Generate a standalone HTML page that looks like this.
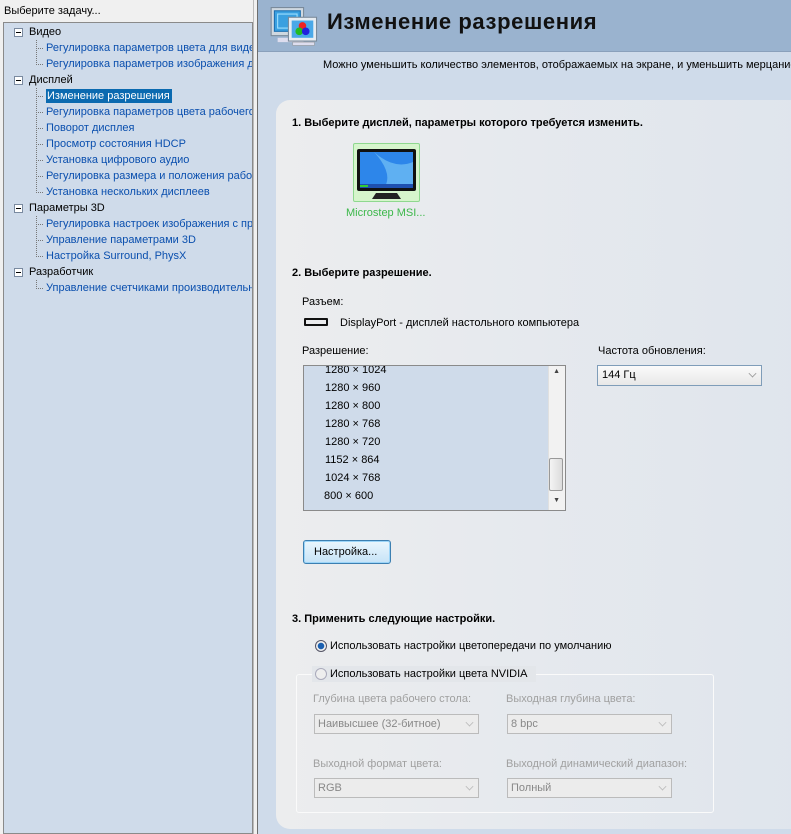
<!DOCTYPE html>
<html><head><meta charset="utf-8"><style>
*{margin:0;padding:0;box-sizing:border-box}
body{width:791px;height:834px;overflow:hidden;background:#f0f0f0;font-family:"Liberation Sans","DejaVu Sans",sans-serif;font-size:11px;color:#000;position:relative}
.a{position:absolute;white-space:nowrap}
#lefttitle{left:4px;top:5px;font-size:11px}
#tree{position:absolute;left:3px;top:22px;width:250px;height:812px;background:#cfdbea;border:1px solid #8a8a8a;overflow:hidden}
.ti{position:absolute;white-space:nowrap;font-size:11px;line-height:14px}
.cat{left:25px;color:#000}
.it{left:42px;color:#0a4fae}
.box{position:absolute;left:10px;width:9px;height:9px;border:1px solid #7a8aa0;background:#fff}
.box:after{content:"";position:absolute;left:1px;top:3px;width:5px;height:1px;background:#000}
.vl{position:absolute;border-left:1px dotted #777}
.hl{position:absolute;border-top:1px dotted #777;width:7px}
#div{position:absolute;left:253px;top:0;width:5px;height:834px;background:#f0f0f0;border-right:1px solid #6e6e6e;border-left:1px solid #bbb}
#right{position:absolute;left:258px;top:0;width:533px;height:834px;background:#cfdbea}
#hdr{position:absolute;left:0;top:0;width:533px;height:52px;background:#9ab3cf;border-bottom:1px solid #8aa0bb}
#ttl{position:absolute;left:69px;top:9px;font-size:22px;font-weight:bold;letter-spacing:0.6px;color:#111}
#panel{position:absolute;left:18px;top:100px;width:530px;height:729px;border-radius:14px 0 0 14px;background:linear-gradient(90deg,#ecedee,#dfe5ed)}
.b{font-weight:bold}
.sel{position:absolute;border:1px solid #7f9db9;background:linear-gradient(#fbfbfb,#e8e8e8)}
.dis{color:#a0a0a0}
.arr{position:absolute;right:5px;top:4px;width:7px;height:7px;border-right:1px solid #999;border-bottom:1px solid #999;transform:rotate(45deg) scale(0.8)}
</style></head><body>
<div class="a" id="lefttitle">Выберите задачу...</div>
<div id="tree">
 <div class="vl" style="left:32px;top:17px;height:25px"></div>
 <div class="vl" style="left:32px;top:65px;height:105px"></div>
 <div class="vl" style="left:32px;top:193px;height:41px"></div>
 <div class="vl" style="left:32px;top:257px;height:9px"></div>
 <div class="hl" style="left:32px;top:25px"></div><div class="hl" style="left:32px;top:41px"></div>
 <div class="hl" style="left:32px;top:73px"></div><div class="hl" style="left:32px;top:89px"></div><div class="hl" style="left:32px;top:105px"></div><div class="hl" style="left:32px;top:121px"></div><div class="hl" style="left:32px;top:137px"></div><div class="hl" style="left:32px;top:153px"></div><div class="hl" style="left:32px;top:169px"></div>
 <div class="hl" style="left:32px;top:201px"></div><div class="hl" style="left:32px;top:217px"></div><div class="hl" style="left:32px;top:233px"></div>
 <div class="hl" style="left:32px;top:265px"></div>
 <div class="box" style="top:5px"></div><div class="ti cat" style="top:2px">Видео</div>
 <div class="ti it" style="top:18px">Регулировка параметров цвета для видео</div>
 <div class="ti it" style="top:34px">Регулировка параметров изображения для видео</div>
 <div class="box" style="top:53px"></div><div class="ti cat" style="top:50px">Дисплей</div>
 <div class="ti it" style="top:66px;background:#0b6ab0;color:#fff;padding:0 2px 0 1px;left:42px">Изменение разрешения</div>
 <div class="ti it" style="top:82px">Регулировка параметров цвета рабочего стола</div>
 <div class="ti it" style="top:98px">Поворот дисплея</div>
 <div class="ti it" style="top:114px">Просмотр состояния HDCP</div>
 <div class="ti it" style="top:130px">Установка цифрового аудио</div>
 <div class="ti it" style="top:146px">Регулировка размера и положения рабочего стола</div>
 <div class="ti it" style="top:162px">Установка нескольких дисплеев</div>
 <div class="box" style="top:181px"></div><div class="ti cat" style="top:178px">Параметры 3D</div>
 <div class="ti it" style="top:194px">Регулировка настроек изображения с просмотром</div>
 <div class="ti it" style="top:210px">Управление параметрами 3D</div>
 <div class="ti it" style="top:226px">Настройка Surround, PhysX</div>
 <div class="box" style="top:245px"></div><div class="ti cat" style="top:242px">Разработчик</div>
 <div class="ti it" style="top:258px">Управление счетчиками производительности</div>
</div>
<div id="div"></div>
<div id="right">
 <div id="hdr">
  <svg style="position:absolute;left:11px;top:5px" width="54" height="44" viewBox="0 0 50 40">
   <rect x="2" y="2" width="30" height="26" fill="#cfd8e0" stroke="#7a8a9a"/>
   <rect x="5" y="5" width="24" height="19" fill="#3aa0e0" stroke="#1c6fb0"/>
   <rect x="8" y="8" width="18" height="13" fill="none" stroke="#9fe0ff"/>
   <rect x="8" y="30" width="24" height="4" fill="#dde"/>
   <rect x="18" y="11" width="26" height="22" fill="#e6ecf2" stroke="#7a8a9a"/>
   <rect x="21" y="14" width="20" height="16" fill="#4aa8e8"/>
   <circle cx="31" cy="19" r="3.5" fill="#e22"/><circle cx="28" cy="24" r="3.5" fill="#2b2"/><circle cx="34" cy="24" r="3.5" fill="#22d"/>
   <rect x="22" y="34" width="20" height="3" fill="#dde" stroke="#999" stroke-width=".5"/>
  </svg>
  <div id="ttl">Изменение разрешения</div>
 </div>
 <div class="a" style="left:65px;top:59px">Можно уменьшить количество элементов, отображаемых на экране, и уменьшить мерцание</div>
 <div id="panel"></div>
 <div class="a b" style="left:34px;top:117px">1. Выберите дисплей, параметры которого требуется изменить.</div>
 <div style="position:absolute;left:95px;top:143px;width:67px;height:59px;border:1px solid #8fd88f;background:#d6f5cc;border-radius:2px">
  <svg width="65" height="57" viewBox="0 0 65 57"><rect x="3" y="5" width="59" height="42" fill="#111" rx="2"/><rect x="6" y="8" width="53" height="36" fill="#2d86ea"/><path d="M20 8 Q40 26 59 18 V44 H30 Q40 30 20 8Z" fill="#5fb0f2"/><rect x="6" y="40" width="53" height="4" fill="#1e50b0"/><rect x="6" y="41" width="8" height="2" fill="#3c3"/><path d="M18 55 L22 49 H43 L47 55Z" fill="#222"/></svg>
 </div>
 <div class="a" style="left:88px;top:207px;color:#3cb84a">Microstep MSI...</div>
 <div class="a b" style="left:34px;top:267px">2. Выберите разрешение.</div>
 <div class="a" style="left:44px;top:296px">Разъем:</div>
 <div style="position:absolute;left:46px;top:318px;width:24px;height:8px;border:2px solid #111;border-radius:1px"></div>
 <div class="a" style="left:82px;top:317px">DisplayPort - дисплей настольного компьютера</div>
 <div class="a" style="left:44px;top:345px">Разрешение:</div>
 <div class="a" style="left:340px;top:345px">Частота обновления:</div>
 <div style="position:absolute;left:45px;top:365px;width:263px;height:146px;border:1px solid #8a8a8a;background:#cfdbea;overflow:hidden">
  <div class="a" style="left:21px;top:-2px">1280 × 1024</div>
  <div class="a" style="left:21px;top:16px">1280 × 960</div>
  <div class="a" style="left:21px;top:34px">1280 × 800</div>
  <div class="a" style="left:21px;top:52px">1280 × 768</div>
  <div class="a" style="left:21px;top:70px">1280 × 720</div>
  <div class="a" style="left:21px;top:88px">1152 × 864</div>
  <div class="a" style="left:21px;top:106px">1024 × 768</div>
  <div class="a" style="left:20px;top:124px">800 × 600</div>
  <div style="position:absolute;right:0;top:0;width:17px;height:144px;background:#f2f2f2;border-left:1px solid #e0e0e0"></div>
  <div class="a" style="right:5px;top:2px;font-size:7px;color:#444">▲</div>
  <div class="a" style="right:5px;top:131px;font-size:7px;color:#444">▼</div>
  <div style="position:absolute;right:2px;top:92px;width:14px;height:33px;border:1px solid #999;border-radius:2px;background:linear-gradient(90deg,#f4f4f4,#dcdcdc)"></div>
 </div>
 <div class="sel" style="left:339px;top:365px;width:165px;height:21px"><div class="a" style="left:4px;top:3px">144 Гц</div><div class="arr"></div></div>
 <div style="position:absolute;left:45px;top:540px;width:88px;height:24px;border:1px solid #3c7fb1;border-radius:3px;background:linear-gradient(#eaf6fd,#c6e3f7);box-shadow:inset 0 0 0 1px #9cd5f8"><div class="a" style="left:10px;top:5px">Настройка...</div></div>
 <div class="a b" style="left:34px;top:613px">3. Применить следующие настройки.</div>
 <div style="position:absolute;left:57px;top:640px;width:12px;height:12px;border-radius:50%;border:1px solid #556;background:radial-gradient(circle,#1a5fb0 0 3px,#eee 3.5px)"></div>
 <div class="a" style="left:72px;top:640px">Использовать настройки цветопередачи по умолчанию</div>
 <div style="position:absolute;left:38px;top:674px;width:418px;height:139px;border:1px solid #fafafa;border-radius:3px"></div>
 <div style="position:absolute;left:54px;top:666px;width:224px;height:16px;background:#e3e6ea"></div>
 <div style="position:absolute;left:57px;top:668px;width:12px;height:12px;border-radius:50%;border:1px solid #aab;background:#eee"></div>
 <div class="a" style="left:72px;top:668px">Использовать настройки цвета NVIDIA</div>
 <div class="a dis" style="left:55px;top:693px">Глубина цвета рабочего стола:</div>
 <div class="a dis" style="left:248px;top:693px">Выходная глубина цвета:</div>
 <div class="sel" style="left:56px;top:714px;width:165px;height:20px;border-color:#bbb;background:#ececec"><div class="a dis" style="left:3px;top:3px;color:#888">Наивысшее (32-битное)</div><div class="arr" style="border-color:#bbb"></div></div>
 <div class="sel" style="left:249px;top:714px;width:165px;height:20px;border-color:#bbb;background:#ececec"><div class="a dis" style="left:3px;top:3px;color:#888">8 bpc</div><div class="arr" style="border-color:#bbb"></div></div>
 <div class="a dis" style="left:55px;top:758px">Выходной формат цвета:</div>
 <div class="a dis" style="left:248px;top:758px">Выходной динамический диапазон:</div>
 <div class="sel" style="left:56px;top:778px;width:165px;height:20px;border-color:#bbb;background:#ececec"><div class="a dis" style="left:3px;top:3px;color:#888">RGB</div><div class="arr" style="border-color:#bbb"></div></div>
 <div class="sel" style="left:249px;top:778px;width:165px;height:20px;border-color:#bbb;background:#ececec"><div class="a dis" style="left:3px;top:3px;color:#888">Полный</div><div class="arr" style="border-color:#bbb"></div></div>
</div>
</body></html>
